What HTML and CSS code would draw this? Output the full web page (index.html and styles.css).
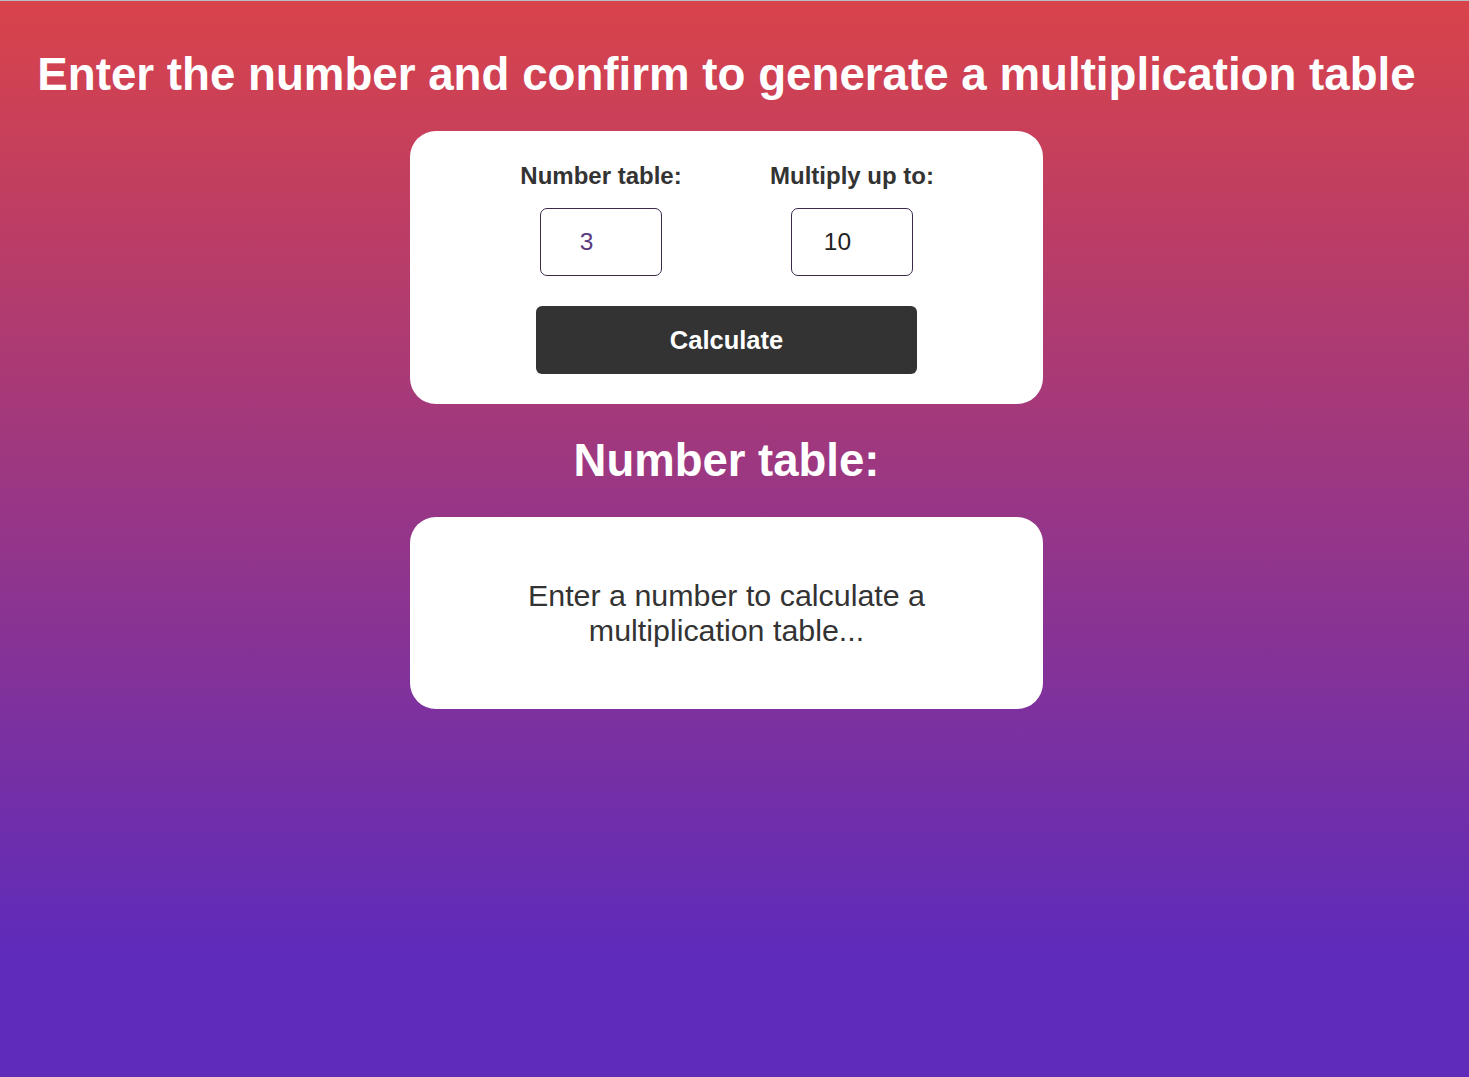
FILE: index.html
```html
<!DOCTYPE html>
<html lang="en">
<head>
<meta charset="utf-8">
<title>Multiplication table</title>
<link rel="stylesheet" href="styles.css">
</head>
<body>
<main class="page">
  <h1 class="title">Enter the number and confirm to generate a multiplication table</h1>
  <section class="card form-card">
    <div class="fields">
      <div class="field">
        <label class="field-label" for="num">Number table:</label>
        <input class="field-input field-input--accent" id="num" type="text" value="3">
      </div>
      <div class="field">
        <label class="field-label" for="upto">Multiply up to:</label>
        <input class="field-input" id="upto" type="text" value="10">
      </div>
    </div>
    <button class="calc-btn" type="button">Calculate</button>
  </section>
  <h2 class="subtitle">Number table:</h2>
  <section class="card result-card">
    <p class="result-text">Enter a number to calculate a multiplication table...</p>
  </section>
</main>
</body>
</html>
```

FILE: styles.css
```css
html, body {
  margin: 0;
  padding: 0;
}
body {
  min-height: 1077px;
  border-top: 1px solid #b9bcc4;
  box-sizing: border-box;
  background: linear-gradient(to bottom, #d9434a 0px, #5f2bba 950px, #5f2bba 100%);
  font-family: "Liberation Sans", Arial, sans-serif;
  color: #333;
}
.page {
  width: 1453px;
  display: flex;
  flex-direction: column;
  align-items: center;
}
.title {
  margin: 48px 0 0;
  font-size: 45.7px;
  line-height: 52px;
  font-weight: 700;
  color: #fff;
  text-align: center;
}
.card {
  background: #fff;
  border-radius: 26px;
  width: 633px;
  box-sizing: border-box;
}
.form-card {
  margin-top: 30px;
  padding: 30px 0 30px;
  display: flex;
  flex-direction: column;
  align-items: center;
}
.fields {
  display: flex;
  gap: 70px;
}
.field {
  display: flex;
  flex-direction: column;
  align-items: center;
  width: 181px;
}
.field-label {
  font-size: 24px;
  font-weight: 700;
  line-height: 30px;
  color: #333;
}
.field-input {
  margin-top: 17px;
  width: 122px;
  height: 68px;
  box-sizing: border-box;
  border: 1px solid #3b2b4b;
  border-radius: 7px;
  padding: 0 29px 0 0;
  text-align: center;
  font-family: "Liberation Sans", Arial, sans-serif;
  font-size: 24.5px;
  color: #222;
  background: #fff;
  outline: none;
}
.field-input--accent {
  color: #5b3a80;
}
.calc-btn {
  margin-top: 30px;
  width: 381px;
  height: 68px;
  border: none;
  border-radius: 6px;
  background: #333;
  color: #fff;
  font-family: "Liberation Sans", Arial, sans-serif;
  font-size: 25.5px;
  font-weight: 700;
}
.subtitle {
  margin: 29px 0 0;
  font-size: 45.5px;
  line-height: 56px;
  font-weight: 700;
  color: #fff;
}
.result-card {
  margin-top: 28px;
  padding: 0 50px;
  height: 192px;
  display: flex;
  align-items: center;
  justify-content: center;
}
.result-text {
  margin: 0;
  font-size: 30.4px;
  line-height: 35px;
  text-align: center;
  color: #333;
}
```
